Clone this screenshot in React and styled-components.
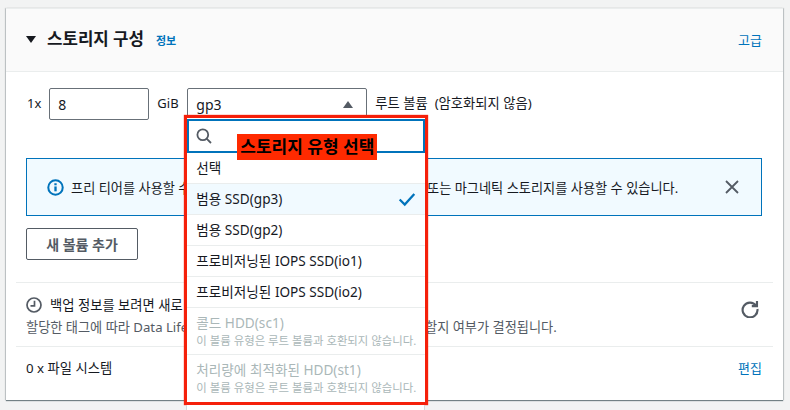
import React from "react";
import styled, { createGlobalStyle } from "styled-components";

const GlobalStyle = createGlobalStyle`
  html, body {
    margin: 0;
    padding: 0;
    background: #f2f3f3;
  }
  body {
    font-family: "Noto Sans", "Noto Sans CJK KR", sans-serif;
    color: #16191f;
  }
`;

const options = [
  { label: "선택", height: 30 },
  { label: "범용 SSD(gp3)", height: 31, selected: true },
  { label: "범용 SSD(gp2)", height: 31 },
  { label: "프로비저닝된 IOPS SSD(io1)", height: 31 },
  { label: "프로비저닝된 IOPS SSD(io2)", height: 31 },
  { label: "콜드 HDD(sc1)", height: 47, note: "이 볼륨 유형은 루트 볼륨과 호환되지 않습니다." },
  { label: "처리량에 최적화된 HDD(st1)", height: 48, note: "이 볼륨 유형은 루트 볼륨과 호환되지 않습니다." },
];

const App = () => {
  return (
    <Page>
      <GlobalStyle />
      <Card>
        <CardHeader>
          <HeaderLeft>
            <Caret />
            <Title>스토리지 구성</Title>
            <InfoLink>정보</InfoLink>
          </HeaderLeft>
          <TextLink>고급</TextLink>
        </CardHeader>
        <CardBody>
          <VolumeRow>
            <CountText>1x</CountText>
            <SizeInput>8</SizeInput>
            <UnitText>GiB</UnitText>
            <SelectWrap>
              <SelectBox>
                gp3
                <SelectArrow />
              </SelectBox>
              <Dropdown>
                <SearchBox>
                  <svg width="16" height="16" viewBox="0 0 16 16" fill="none" stroke="#545b64" strokeWidth="1.8">
                    <circle cx="6.8" cy="6.8" r="5.4" />
                    <path d="M10.6 10.6 15 15" />
                  </svg>
                </SearchBox>
                {options.map((option) => (
                  <OptionRow key={option.label} $selected={option.selected} $tall={!!option.note} $height={option.height}>
                    <OptionLabel $disabled={!!option.note}>{option.label}</OptionLabel>
                    {option.note && <OptionNote>{option.note}</OptionNote>}
                    {option.selected && (
                      <CheckIcon width="18" height="18" viewBox="0 0 16 16" fill="none" stroke="#0073bb" strokeWidth="2">
                        <path d="M1.5 8.5 6 13 14.5 3.5" />
                      </CheckIcon>
                    )}
                  </OptionRow>
                ))}
                <Annotation>스토리지 유형 선택</Annotation>
                <ListTail />
              </Dropdown>
            </SelectWrap>
            <RootLabel>루트 볼륨&nbsp; (암호화되지 않음)</RootLabel>
          </VolumeRow>
          <InfoAlert>
            <AlertMain>
              <svg width="17" height="17" viewBox="0 0 16 16" fill="none">
                <circle cx="8" cy="8" r="6.8" stroke="#0073bb" strokeWidth="1.9" />
                <path d="M8 7v4.6" stroke="#0073bb" strokeWidth="2.2" />
                <path d="M8 4v1.9" stroke="#0073bb" strokeWidth="2.2" />
              </svg>
              <AlertLead>프리 티어를 사용할 수</AlertLead>
              <AlertText>또는 마그네틱 스토리지를 사용할 수 있습니다.</AlertText>
            </AlertMain>
            <svg width="16" height="16" viewBox="0 0 16 16" fill="none" stroke="#545b64" strokeWidth="1.8">
              <path d="M2 2 14 14M14 2 2 14" />
            </svg>
          </InfoAlert>
          <AddButton>새 볼륨 추가</AddButton>
        </CardBody>
        <BackupSection>
          <BackupText>
            <BackupTitle>
              <svg width="16" height="16" viewBox="0 0 16 16" fill="none" stroke="#545b64" strokeWidth="1.7">
                <circle cx="8" cy="8" r="7" />
                <path d="M8.5 3.8V8.8H4.5" />
              </svg>
              백업 정보를 보려면 새로
            </BackupTitle>
            <BackupNote>
              <NoteLead>할당한 태그에 따라 Data Life</NoteLead>
              <span>할지 여부가 결정됩니다.</span>
            </BackupNote>
          </BackupText>
          <RefreshIcon width="18" height="18" viewBox="0 0 16 16" fill="none" stroke="#545b64" strokeWidth="1.9">
            <path d="M13.4 5A6.6 6.6 0 1 0 14.6 8" />
            <path d="M14.2 0.8V5.4H9.6" />
          </RefreshIcon>
        </BackupSection>
        <FileSection>
          <FileText>0 x 파일 시스템</FileText>
          <TextLink>편집</TextLink>
        </FileSection>
      </Card>
    </Page>
  );
};

export default App;

const Page = styled.div`
  width: 790px;
  height: 410px;
  padding: 8px 7px 0 6px;
  box-sizing: border-box;
  overflow: hidden;
`;

const Card = styled.div`
  background: #fff;
  height: 392px;
  box-sizing: border-box;
  border-top: 1px solid #eaeded;
  box-shadow: 0 1px 1px 0 rgba(0, 28, 36, 0.5), 1px 0 1px 0 rgba(0, 28, 36, 0.15), -1px 0 1px 0 rgba(0, 28, 36, 0.15);
`;

const CardHeader = styled.div`
  height: 63px;
  box-sizing: border-box;
  background: #fafafa;
  border-bottom: 1px solid #eaeded;
  display: flex;
  align-items: center;
  justify-content: space-between;
  padding: 0 21px 2px 20px;
`;

const HeaderLeft = styled.div`
  display: flex;
  align-items: center;
`;

const Caret = styled.span`
  width: 0;
  height: 0;
  border-left: 5px solid transparent;
  border-right: 5px solid transparent;
  border-top: 7px solid #16191f;
  margin-right: 11px;
`;

const Title = styled.h2`
  margin: 0;
  font-size: 16.8px;
  font-weight: 700;
  line-height: 22px;
`;

const InfoLink = styled.span`
  margin-left: 12px;
  margin-top: 2px;
  font-size: 11px;
  font-weight: 700;
  color: #0073bb;
`;

const TextLink = styled.span`
  font-size: 13px;
  color: #0073bb;
`;

const CardBody = styled.div`
  padding: 16px 21px 0 20px;
  height: 210px;
  box-sizing: border-box;
`;

const VolumeRow = styled.div`
  display: flex;
  align-items: flex-start;
  height: 70px;
  line-height: 31px;
  font-size: 13px;
`;

const CountText = styled.span`
  margin-left: 1px;
  font-size: 13px;
`;

const FileText = styled.span`
  font-size: 13.3px;
`;

const SizeInput = styled.div`
  width: 100px;
  height: 32px;
  box-sizing: border-box;
  margin-left: 8px;
  padding-left: 8px;
  border: 1px solid #687078;
  border-radius: 2px;
  font-size: 14px;
`;

const UnitText = styled.span`
  margin-left: 8px;
  width: 30px;
  color: #16191f;
`;

const SelectWrap = styled.div`
  position: relative;
  width: 180px;
`;

const SelectBox = styled.div`
  height: 32px;
  box-sizing: border-box;
  padding: 0 13px 0 8px;
  border: 1px solid #687078;
  border-radius: 2px;
  display: flex;
  align-items: center;
  justify-content: space-between;
  font-size: 14px;
`;

const SelectArrow = styled.span`
  width: 0;
  height: 0;
  border-left: 5px solid transparent;
  border-right: 5px solid transparent;
  border-bottom: 7px solid #545b64;
`;

const RootLabel = styled.span`
  margin-left: 8px;
  font-size: 13.3px;
`;

const Dropdown = styled.div`
  position: absolute;
  top: 27px;
  left: -3px;
  width: 244px;
  height: 290px;
  box-sizing: border-box;
  padding-top: 1px;
  background: #fff;
  border: 3px solid #f5200a;
  box-shadow: 0 0 1px #f5200a;
  z-index: 2;
`;

const SearchBox = styled.div`
  height: 34px;
  box-sizing: border-box;
  border: 2px solid #0073bb;
  display: flex;
  align-items: center;
  padding-left: 7px;
`;

const OptionRow = styled.div`
  position: relative;
  height: ${({ $height }) => $height}px;
  box-sizing: border-box;
  padding: ${({ $tall }) => ($tall ? "5px 9px 0" : "0 9px")};
  display: flex;
  flex-direction: column;
  justify-content: ${({ $tall }) => ($tall ? "flex-start" : "center")};
  background: ${({ $selected }) => ($selected ? "#f1faff" : "#fff")};
  border-top: 1px solid #eaeded;
  &:nth-child(2) {
    border-top: none;
  }
`;

const OptionLabel = styled.span`
  font-size: 13.6px;
  line-height: 20px;
  white-space: nowrap;
  color: ${({ $disabled }) => ($disabled ? "#aab7b8" : "#16191f")};
`;

const OptionNote = styled.span`
  font-size: 11.4px;
  line-height: 16px;
  color: #aab7b8;
  white-space: nowrap;
`;

const CheckIcon = styled.svg`
  position: absolute;
  right: 9px;
  top: 6px;
`;

const Annotation = styled.div`
  position: absolute;
  left: 50px;
  top: 16px;
  width: 140px;
  height: 26px;
  background: #ff2a00;
  color: #000;
  font-size: 17px;
  font-weight: 700;
  line-height: 26px;
  text-align: center;
  white-space: nowrap;
`;

const ListTail = styled.div`
  position: absolute;
  top: calc(100% + 3px);
  left: -1px;
  right: 0;
  height: 10px;
  box-sizing: border-box;
  background: #fff;
  border-left: 1px solid #d5dbdb;
  border-right: 1px solid #d5dbdb;
`;

const InfoAlert = styled.div`
  height: 58px;
  box-sizing: border-box;
  border: 1px solid #0073bb;
  background: #f1faff;
  display: flex;
  align-items: center;
  justify-content: space-between;
  padding: 0 21px 0 20px;
`;

const AlertMain = styled.div`
  display: flex;
  align-items: center;
  gap: 7px;
  font-size: 13.2px;
  white-space: nowrap;
`;

const AlertLead = styled.span`
  width: 356px;
`;

const AlertText = styled.span`
  margin-left: -7px;
`;

const AddButton = styled.div`
  margin-top: 12px;
  width: 112px;
  height: 32px;
  box-sizing: border-box;
  border: 1px solid #545b64;
  border-radius: 2px;
  color: #545b64;
  font-size: 14px;
  font-weight: 700;
  display: flex;
  align-items: center;
  justify-content: center;
`;

const BackupSection = styled.div`
  margin: 0 10px;
  height: 65px;
  box-sizing: border-box;
  border-top: 1px solid #eaeded;
  border-bottom: 1px solid #eaeded;
  display: flex;
  align-items: flex-start;
  justify-content: space-between;
  padding: 11px 11px 0 10px;
`;

const BackupText = styled.div`
  display: flex;
  flex-direction: column;
`;

const BackupTitle = styled.div`
  display: flex;
  align-items: center;
  gap: 8px;
  font-size: 13.3px;
  line-height: 22px;
`;

const BackupNote = styled.div`
  display: flex;
  font-size: 13.2px;
  line-height: 22px;
  color: #545b64;
  white-space: nowrap;
`;

const NoteLead = styled.span`
  width: 399px;
`;

const RefreshIcon = styled.svg`
  margin-top: 6px;
  margin-right: 3px;
`;

const FileSection = styled.div`
  margin: 0 10px;
  padding: 11px 11px 0 10px;
  display: flex;
  align-items: center;
  justify-content: space-between;
`;
